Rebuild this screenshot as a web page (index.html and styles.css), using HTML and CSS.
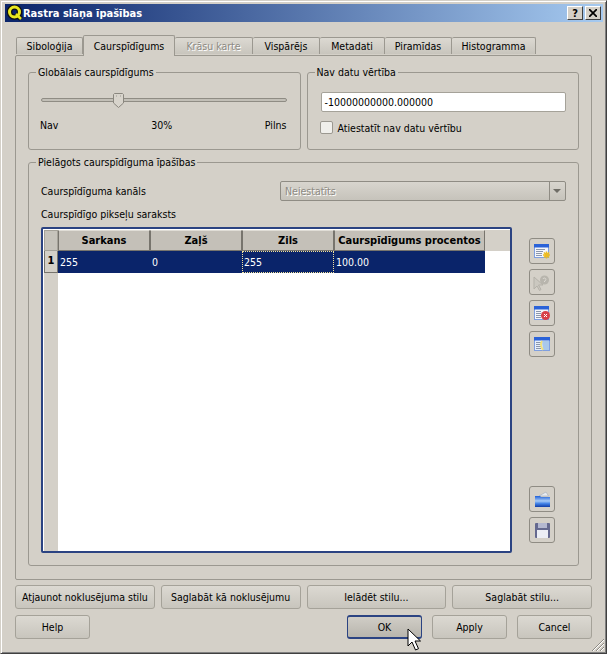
FILE: index.html
```html
<!DOCTYPE html>
<html lang="lv">
<head>
    <meta charset="UTF-8">
    <meta name="viewport" content="width=device-width, initial-scale=1.0">
    <title>Rastra slāņa īpašības</title>
    <link rel="stylesheet" href="styles.css">
</head>
<body>
    <div class="window">
        <div class="titlebar">
            <svg class="app-icon" width="16" height="16" viewBox="0 0 16 16">
                <circle cx="7.500" cy="7" r="5" fill="none" stroke="#111" stroke-width="5.500"/>
                <path d="M9 9l5 5" stroke="#111" stroke-width="5"/>
                <circle cx="7.500" cy="7" r="5" fill="none" stroke="#e8e820" stroke-width="3"/>
                <path d="M9 9l5 5" stroke="#e8e820" stroke-width="2.500"/>
            </svg>
            <span class="title-text">Rastra slāņa īpašības</span>
            <span class="cap-btn first">?</span>
            <span class="cap-btn">
                <svg width="8" height="8" viewBox="0 0 8 8"><path d="M0 0l8 8M8 0L0 8" stroke="#000" stroke-width="1.700"/></svg>
            </span>
        </div>

        <div class="tabs">
            <div class="tab w-sib">Siboloģija</div>
            <div class="tab active w-cau">Caurspīdīgums</div>
            <div class="tab disabled w-kra">Krāsu karte</div>
            <div class="tab w-vis">Vispārējs</div>
            <div class="tab w-met">Metadati</div>
            <div class="tab w-pir">Piramīdas</div>
            <div class="tab w-his">Histogramma</div>
        </div>

        <div class="pane">
            <div class="top-groups">
                <fieldset class="group">
                    <legend>Globālais caurspīdīgums</legend>
                    <div class="slider">
                        <div class="groove"></div>
                        <svg class="handle" width="11" height="15" viewBox="0 0 11 15">
                            <path d="M1.500.5h8l1 1v8.500l-5 4.500-5-4.500V1.500z" fill="#d8d4cc" stroke="#8a877f"/>
                            <path d="M3 3h1M7 3h1" stroke="#9c9a92"/>
                        </svg>
                    </div>
                    <div class="slider-labels">
                        <span>Nav</span><span>30%</span><span>Pilns</span>
                    </div>
                </fieldset>
                <fieldset class="group">
                    <legend>Nav datu vērtība</legend>
                    <div class="text-input">-10000000000.000000</div>
                    <div class="check-row">
                        <span class="checkbox"></span>
                        <span>Atiestatīt nav datu vērtību</span>
                    </div>
                </fieldset>
            </div>

            <fieldset class="group custom">
                <legend>Pielāgots caurspīdīguma īpašības</legend>
                <div class="channel-row">
                    <span>Caurspīdīguma kanāls</span>
                    <div class="combo">
                        <span class="combo-text">Neiestatīts</span>
                        <span class="combo-arrow"></span>
                    </div>
                </div>
                <div class="list-label">Caurspīdīgo pikseļu saraksts</div>
                <div class="table-row">
                    <div class="table">
                        <div class="thead">
                            <div class="corner"></div>
                            <div class="th c1">Sarkans</div>
                            <div class="th c1">Zaļš</div>
                            <div class="th c1">Zils</div>
                            <div class="th c2">Caurspīdīgums procentos</div>
                        </div>
                        <div class="tbody">
                            <div class="gutter"><div class="row-no">1</div></div>
                            <div class="cells">
                                <div class="row">
                                    <div class="td c1">255</div>
                                    <div class="td c1">0</div>
                                    <div class="td c1 current">255</div>
                                    <div class="td c2">100.00</div>
                                </div>
                            </div>
                        </div>
                    </div>
                    <div class="side-btns">
                        <button class="icon-btn">
                            <svg width="17" height="17" viewBox="0 0 17 17">
                                <rect x="0.500" y="1.500" width="14" height="13" fill="#f4f6fb" stroke="#7f9fe0"/>
                                <rect x="0" y="1" width="15" height="3.500" fill="#2a62d8"/>
                                <path d="M2 6.500h9M2 8.500h7M2 10.500h6M2 12.500h6" stroke="#8a96ad"/>
                                <path d="M12.500 8.500v7M9 12h7M10 9.500l5 5M15 9.500l-5 5" stroke="#eebc20" stroke-width="1.500"/>
                            </svg>
                        </button>
                        <button class="icon-btn">
                            <svg width="18" height="17" viewBox="0 0 18 17">
                                <path d="M1 3v12l3-3 2.500 4.500 1.500-1-2.500-4.500H10z" fill="#cbc8c0" stroke="#b4b1a9"/>
                                <circle cx="11.500" cy="6" r="4.500" fill="#b8b5ad"/>
                                <path d="M10 5a1.500 1.500 0 1 1 1.500 2v1" fill="none" stroke="#dcd9d2"/>
                            </svg>
                        </button>
                        <button class="icon-btn">
                            <svg width="17" height="17" viewBox="0 0 17 17">
                                <rect x="0.500" y="1.500" width="14" height="13" fill="#f4f6fb" stroke="#7f9fe0"/>
                                <rect x="0" y="1" width="15" height="3.500" fill="#2a62d8"/>
                                <path d="M2 6.500h5M2 8.500h5M2 10.500h5M2 12.500h5" stroke="#8a96ad"/>
                                <circle cx="11.500" cy="10.500" r="4.500" fill="#d8404a"/>
                                <path d="M10 9l3 3M13 9l-3 3" stroke="#fff"/>
                            </svg>
                        </button>
                        <button class="icon-btn">
                            <svg width="17" height="17" viewBox="0 0 17 17">
                                <rect x="0.500" y="1.500" width="15" height="13" fill="#e6eefa" stroke="#7f9fe0"/>
                                <rect x="0" y="1" width="16" height="3.500" fill="#2a62d8"/>
                                <path d="M2 6.500h5M2 8.500h5M2 10.500h5M2 12.500h5" stroke="#8a96ad"/>
                                <path d="M8 5h7v9H9z" fill="#a9c8ea"/>
                                <path d="M8 5c-2 3-1 6 1 9" fill="none" stroke="#f2e27a" stroke-width="1.800"/>
                            </svg>
                        </button>
                        <div class="side-gap"></div>
                        <button class="icon-btn">
                            <svg width="17" height="17" viewBox="0 0 17 17">
                                <defs>
                                    <linearGradient id="folderFill" x1="0" y1="0" x2="0" y2="1">
                                        <stop offset="0" stop-color="#1e5fd8"/>
                                        <stop offset="0.450" stop-color="#a8cbf6"/>
                                        <stop offset="0.700" stop-color="#3f80e6"/>
                                        <stop offset="1" stop-color="#123da6"/>
                                    </linearGradient>
                                </defs>
                                <path d="M5 5l7-4 2.500 4z" fill="#e8ebf0" stroke="#a3abbb" stroke-width=".6"/>
                                <path d="M1 5h5l1 1h9v10H1z" fill="url(#folderFill)"/>
                            </svg>
                        </button>
                        <button class="icon-btn">
                            <svg width="17" height="17" viewBox="0 0 17 17">
                                <rect x="1" y="1" width="15" height="15" rx="1" fill="#65698f"/>
                                <rect x="4" y="1" width="9" height="5" fill="#b4b8d0"/>
                                <rect x="3" y="8" width="11" height="8" fill="#eceef5"/>
                            </svg>
                        </button>
                    </div>
                </div>
            </fieldset>
        </div>

        <div class="style-btns">
            <button class="btn">Atjaunot noklusējuma stilu</button>
            <button class="btn">Saglabāt kā noklusējumu</button>
            <button class="btn">Ielādēt stilu...</button>
            <button class="btn">Saglabāt stilu...</button>
        </div>
        <div class="dialog-btns">
            <button class="btn fixed">Help</button>
            <div class="spacer"></div>
            <button class="btn fixed default">OK</button>
            <button class="btn fixed">Apply</button>
            <button class="btn fixed">Cancel</button>
        </div>

        <svg class="size-grip" width="13" height="13" viewBox="0 0 13 13">
            <path d="M13 1L1 13M13 5L5 13M13 9L9 13" stroke="#8d8a83"/>
            <path d="M13 2L2 13M13 6L6 13M13 10L10 13" stroke="#fff"/>
        </svg>
        <svg class="cursor" width="14" height="24" viewBox="0 0 14 24">
            <path d="M1 1v17l4-4 3.500 8 3-1.300L8 13h5.500z" fill="#fff" stroke="#000"/>
        </svg>
    </div>
</body>
</html>
```

FILE: styles.css
```css
* {
    box-sizing: border-box;
}
html, body {
    margin: 0;
    padding: 0;
}
body {
    width: 607px;
    height: 654px;
    overflow: hidden;
    background-color: #d4d0c8;
    font-family: "DejaVu Sans Condensed", "DejaVu Sans", sans-serif;
    font-size: 10.500px;
    color: #000;
}
.window {
    position: relative;
    width: 607px;
    height: 654px;
    padding: 4px 15px 0 14px;
    background-color: #d4d0c8;
    border: 1px solid;
    border-color: #d4d0c8 #404040 #404040 #d4d0c8;
    box-shadow: inset 1px 1px 0 #fff, inset -1px -1px 0 #808080;
}

/* title bar */
.titlebar {
    display: flex;
    align-items: center;
    height: 18px;
    margin: -1px -12px 0 -10px;
    padding: 0 2px 0 2px;
    background: linear-gradient(to right, #0a246a, #a6caf0);
    color: #fff;
    font-weight: bold;
    font-size: 11px;
}
.app-icon {
    flex: none;
}
.title-text {
    flex: 1;
}
.cap-btn {
    display: flex;
    align-items: center;
    justify-content: center;
    width: 16px;
    height: 14px;
    background-color: #d4d0c8;
    color: #000;
    font-size: 11px;
    font-weight: bold;
    border: 1px solid;
    border-color: #fff #404040 #404040 #fff;
}
.cap-btn.first {
    margin-right: 2px;
}

/* tabs */
.tabs {
    display: flex;
    align-items: flex-end;
    height: 21px;
    margin-top: 12px;
    padding-left: 1px;
    position: relative;
    z-index: 1;
}
.tab {
    display: flex;
    align-items: center;
    justify-content: center;
    height: 17px;
    margin-bottom: 1px;
    border: 1px solid #9b9890;
    border-bottom: none;
    border-left: none;
    border-radius: 2px 2px 0 0;
    background: linear-gradient(#dcd9d2, #c8c5bd);
}
.tab:first-child {
    border-left: 1px solid #9b9890;
}
.tab.active {
    height: 21px;
    margin-bottom: -1px;
    border-left: 1px solid #9b9890;
    background: #d4d0c8;
}
.tab.disabled {
    color: #8d8a83;
    text-shadow: 1px 1px 0 #fff;
}
.w-sib { width: 67px; }
.w-cau { width: 92px; }
.w-kra { width: 78px; }
.w-vis { width: 67px; }
.w-met { width: 65px; }
.w-pir { width: 67px; }
.w-his { width: 84px; }

.pane {
    height: 525px;
    margin: 0 -1px 0 0;
    padding: 9px 12px 12px 12px;
    border: 1px solid #9b9890;
    border-radius: 2px;
}

/* group boxes */
.top-groups {
    display: flex;
    gap: 6px;
}
.group {
    margin: 0;
    min-width: 0;
    border: 1px solid #9b9890;
    border-radius: 3px;
    padding: 0;
}
.group legend {
    margin-left: -5px;
    padding: 0 2px;
    line-height: 14px;
}
.top-groups .group {
    flex: 1 1 0;
    height: 85px;
    padding: 13px 13px 0 12px;
}
.slider {
    position: relative;
    height: 15px;
    margin: 1px 0 0 0;
}
.groove {
    position: absolute;
    left: 0;
    right: 0;
    top: 5px;
    height: 4px;
    background-color: #c2bfb7;
    border: 1px solid #8f8c84;
    border-radius: 2px;
}
.handle {
    position: absolute;
    left: 72px;
    top: 0;
}
.slider-labels {
    display: flex;
    justify-content: space-between;
    margin: 10px 0 0 -1px;
    line-height: 14px;
}
.text-input {
    height: 20px;
    margin: 0 -1px 0 1px;
    padding: 0 3px;
    line-height: 19px;
    background-color: #fff;
    border: 1px solid #a5a299;
    border-radius: 2px;
}
.check-row {
    display: flex;
    align-items: center;
    gap: 5px;
    margin-top: 9px;
}
.checkbox {
    width: 13px;
    height: 13px;
    background-color: #f0efeb;
    border: 1px solid #9b9890;
    border-radius: 2px;
}

.custom {
    height: 411px;
    margin-top: 5px;
    padding: 12px 12px 0 12px;
}
.channel-row {
    display: flex;
    justify-content: space-between;
    align-items: center;
    height: 20px;
}
.combo {
    display: flex;
    align-items: center;
    width: 286px;
    height: 20px;
    background: linear-gradient(#d8d5ce, #c6c3bb);
    border: 1px solid #8f8c84;
    border-radius: 2px;
}
.combo-text {
    flex: 1;
    padding-left: 4px;
    color: #8d8a83;
    text-shadow: 1px 1px 0 #fff;
}
.combo-arrow {
    position: relative;
    width: 16px;
    height: 18px;
    border-left: 1px solid #8f8c84;
}
.combo-arrow::after {
    content: "";
    position: absolute;
    left: 3px;
    top: 7px;
    border: 4px solid transparent;
    border-bottom: none;
    border-top: 4px solid #6f6d66;
}
.list-label {
    margin-top: 6px;
    line-height: 14px;
}

/* table */
.table-row {
    display: flex;
    margin-top: 6px;
    gap: 17px;
}
.table {
    display: flex;
    flex-direction: column;
    width: 471px;
    height: 326px;
    border: 2px solid #2b4382;
    border-radius: 2px;
    background-color: #fff;
    padding: 1px 0 0 1px;
}
.thead {
    display: flex;
    flex: none;
    height: 21px;
    background-color: #d4d0c8;
    font-weight: bold;
    font-size: 11px;
}
.corner {
    flex: none;
    width: 14px;
    background-color: #c6c3bb;
    border: 1px solid #a5a299;
}
.th {
    display: flex;
    align-items: center;
    justify-content: center;
    flex: none;
    background: #c4c0b8;
    border: 1px solid;
    border-color: #e0ddd6 #77746d #77746d #77746d;
    white-space: nowrap;
}
.c1 {
    width: 92px;
}
.c2 {
    width: 151px;
}
.tbody {
    display: flex;
    flex: 1;
}
.gutter {
    flex: none;
    width: 14px;
    background-color: #d4d0c8;
}
.row-no {
    height: 22px;
    line-height: 20px;
    text-align: center;
    font-weight: bold;
    font-size: 11px;
    background-color: #d4d0c8;
    border: 1px solid #77746d;
    border-top: none;
}
.row {
    display: flex;
    height: 22px;
}
.td {
    flex: none;
    padding-left: 2px;
    line-height: 22px;
    color: #fff;
    background-color: #0a246a;
}
.td.current {
    outline: 1px dotted #f2e29a;
    outline-offset: -1px;
}

/* side tool buttons */
.side-btns {
    display: flex;
    flex-direction: column;
    gap: 5px;
    padding-top: 11px;
}
.side-gap {
    height: 119px;
}
.icon-btn {
    display: flex;
    align-items: center;
    justify-content: center;
    width: 26px;
    height: 26px;
    padding: 0;
    background-color: #d4d0c8;
    border: 1px solid #8f8c84;
    border-radius: 3px;
}

/* bottom buttons */
.style-btns {
    display: flex;
    gap: 6px;
    margin-top: 5px;
    margin-right: -1px;
}
.style-btns .btn {
    flex: 1 1 0;
}
.dialog-btns {
    display: flex;
    gap: 10px;
    margin-top: 6px;
    margin-right: -1px;
}
.spacer {
    flex: 1;
}
.btn {
    height: 24px;
    padding: 0;
    font-family: inherit;
    font-size: 10.500px;
    color: #000;
    background: linear-gradient(#dcd9d2, #c8c5bd);
    border: 1px solid #a5a299;
    border-radius: 3px;
    white-space: nowrap;
}
.btn.fixed {
    width: 75px;
}
.btn.default {
    background: linear-gradient(#d0cdc6, #b8b5ad);
    border-color: #2b4382;
    border-width: 2px 1px;
}

/* overlays */
.size-grip {
    position: absolute;
    right: 2px;
    bottom: 2px;
}
.cursor {
    position: absolute;
    left: 406px;
    top: 627px;
}
```
